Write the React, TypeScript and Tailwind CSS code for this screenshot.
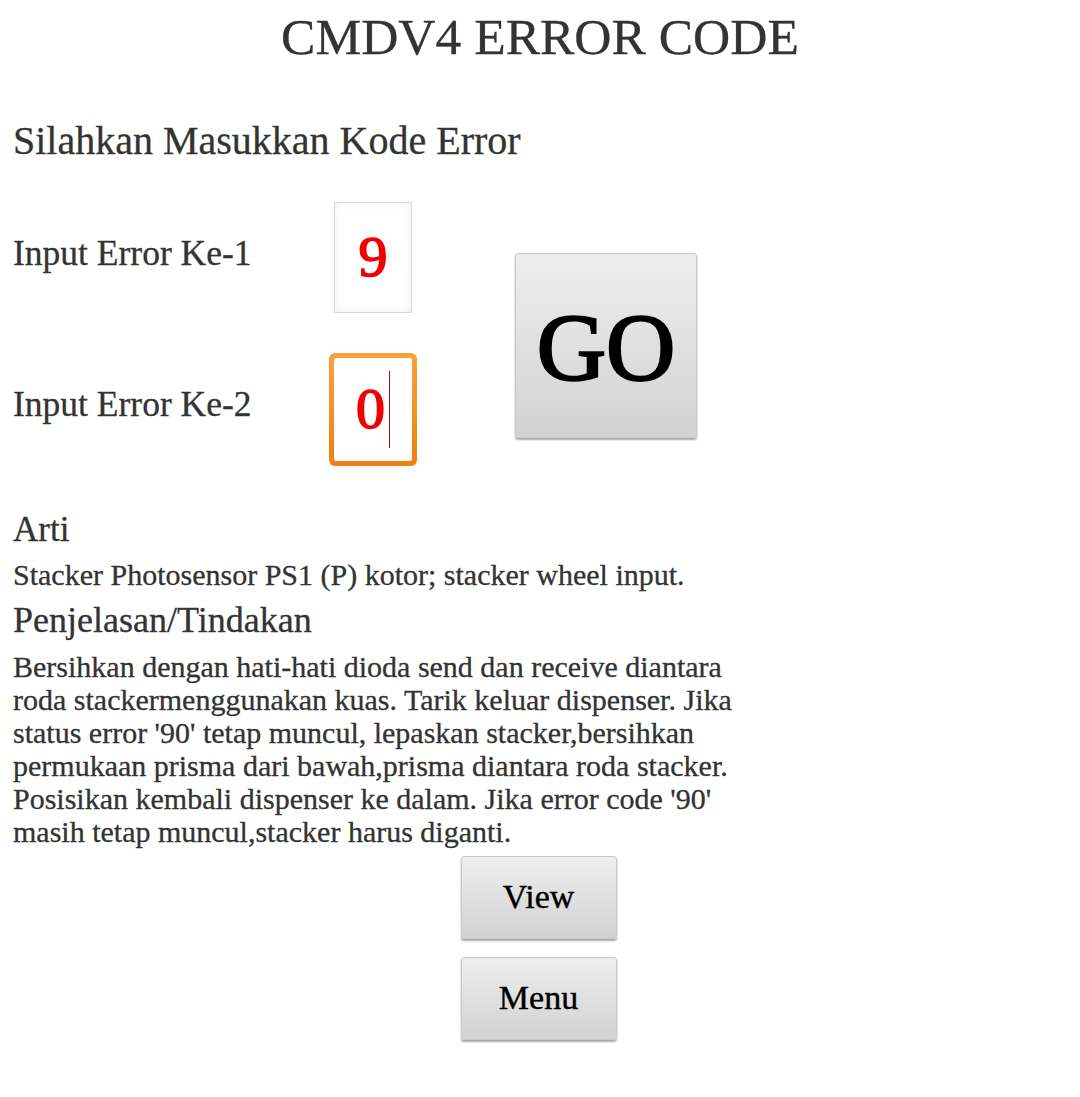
import React from 'react'

const serif = { fontFamily: '"Liberation Serif", "Times New Roman", serif' }

function Label({ children }: { children: React.ReactNode }) {
	return <p className="mt-[34px] text-[35.5px] leading-none text-[#333]">{children}</p>
}

function GrayButton({ children, className }: { children: React.ReactNode; className: string }) {
	return (
		<button
			className={`rounded-[3px] border border-[#c9c9c9] bg-gradient-to-b from-[#eeeeee] to-[#d2d2d2] text-black leading-none shadow-[0_2px_2px_rgba(0,0,0,0.35)] ${className}`}
			style={serif}>
			{children}
		</button>
	)
}

export default function App() {
	return (
		<div className="min-h-[1097px] w-[1080px] bg-white text-[#333] [-webkit-text-stroke:0.3px_#333]" style={serif}>
			<h1 className="pt-[11px] text-center text-[51.5px] leading-none font-normal">CMDV4 ERROR CODE</h1>

			<div className="pl-[13px]">
				<h2 className="mt-[58px] text-[40px] leading-none font-normal">Silahkan Masukkan Kode Error</h2>

				{/* input rows + GO */}
				<div className="mt-[41px] flex items-start">
					<div className="flex flex-col gap-[40px]">
						<div className="flex items-start">
							<div className="w-[316px]"><Label>Input Error Ke-1</Label></div>
							<div className="flex w-[88px] justify-center">
								<div className="flex h-[111px] w-[78px] items-center justify-center border border-[#d9d9d9] bg-white shadow-[inset_0_0_8px_rgba(0,0,0,0.07)]">
									<span className="text-[58px] leading-none text-[#f00000] [-webkit-text-stroke:1.6px_#f00000]">9</span>
								</div>
							</div>
						</div>
						<div className="flex items-start">
							<div className="w-[316px]"><Label>Input Error Ke-2</Label></div>
							<div className="w-[88px] rounded-[6px] bg-gradient-to-b from-[#f8a23a] to-[#ef7f0f] p-[5px]">
								<div className="flex h-[103px] items-center justify-center rounded-[2px] bg-white">
									<span className="text-[58px] leading-none text-[#f00000] [-webkit-text-stroke:1.6px_#f00000]">0</span>
									<span className="ml-[4px] h-[77px] w-px bg-[#9b1010]" />
								</div>
							</div>
						</div>
					</div>
					<GrayButton className="ml-[98px] mt-[51px] h-[185px] w-[182px] pt-[6px] text-[96px] [-webkit-text-stroke:2.4px_black]">GO</GrayButton>
				</div>

				<h3 className="mt-[46px] text-[35px] leading-none font-normal">Arti</h3>
				<p className="mt-[13px] text-[30px] leading-none">Stacker Photosensor PS1 (P) kotor; stacker wheel input.</p>
				<h3 className="mt-[12px] text-[36px] leading-none font-normal">Penjelasan/Tindakan</h3>
				<p className="mt-[12px] w-[745px] text-[30px] leading-[33px]">
					Bersihkan dengan hati-hati dioda send dan receive diantara roda stackermenggunakan kuas. Tarik keluar dispenser. Jika status error '90' tetap muncul, lepaskan stacker,bersihkan permukaan prisma dari bawah,prisma diantara roda stacker. Posisikan kembali dispenser ke dalam. Jika error code '90' masih tetap muncul,stacker harus diganti.
				</p>
			</div>

			<div className="mt-[8px] flex flex-col items-center gap-[18px] pr-[3px]">
				<GrayButton className="h-[83px] w-[156px] text-[34px] [-webkit-text-stroke:0.4px_black]">View</GrayButton>
				<GrayButton className="h-[83px] w-[156px] text-[34px] [-webkit-text-stroke:0.4px_black]">Menu</GrayButton>
			</div>
		</div>
	)
}
